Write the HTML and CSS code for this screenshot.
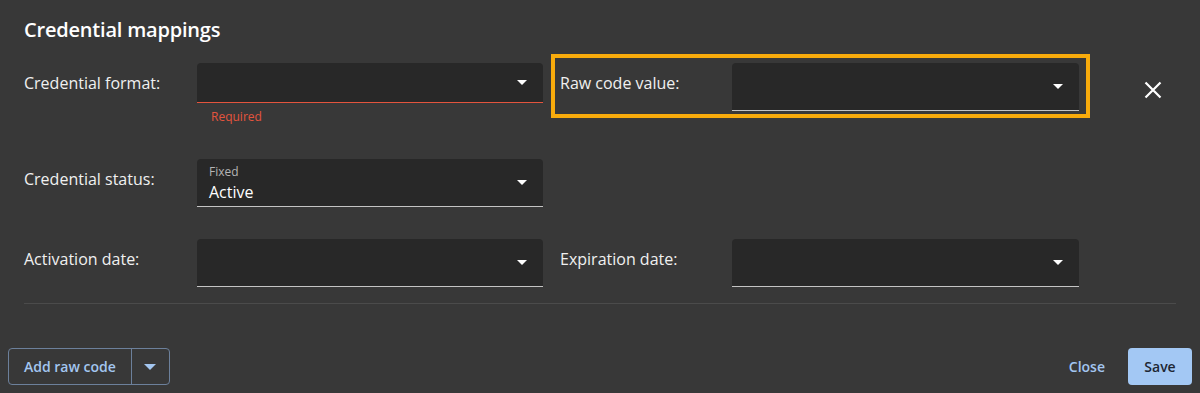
FILE: index.html
```html
<!DOCTYPE html>
<html lang="en">
<head>
<meta charset="utf-8">
<title>Credential mappings</title>
<link rel="stylesheet" href="styles.css">
</head>
<body>
<div class="dialog">
  <h2 class="title">Credential mappings</h2>

  <div class="row row-first">
    <div class="group">
      <span class="label">Credential format:</span>
      <div class="field-wrap">
        <div class="field field-short field-error"><span class="value"></span><span class="caret"></span></div>
        <div class="helper">Required</div>
      </div>
    </div>
    <div class="group group-right highlight">
      <span class="label label-right">Raw code value:</span>
      <div class="field field-right"><span class="value"></span><span class="caret"></span></div>
    </div>
    <button class="remove" aria-label="Remove">
      <svg width="18" height="18" viewBox="0 0 18 18"><path d="M1.5 1.5 L16.5 16.5 M16.5 1.5 L1.5 16.5" stroke="#ffffff" stroke-width="2.2" fill="none"/></svg>
    </button>
  </div>

  <div class="row row-second">
    <div class="group">
      <span class="label">Credential status:</span>
      <div class="field">
        <span class="value value-stack"><span class="small">Fixed</span><span class="big">Active</span></span>
        <span class="caret"></span>
      </div>
    </div>
  </div>

  <div class="row row-third">
    <div class="group">
      <span class="label">Activation date:</span>
      <div class="field"><span class="value"></span><span class="caret"></span></div>
    </div>
    <div class="group group-right">
      <span class="label label-right">Expiration date:</span>
      <div class="field field-right"><span class="value"></span><span class="caret"></span></div>
    </div>
  </div>

  <div class="separator"></div>

  <div class="footer">
    <div class="split">
      <button class="split-main">Add raw code</button>
      <button class="split-toggle" aria-label="More"><span class="caret-blue"></span></button>
    </div>
    <div class="actions">
      <button class="btn-text">Close</button>
      <button class="btn-primary">Save</button>
    </div>
  </div>
</div>
</body>
</html>
```

FILE: styles.css
```css
html, body {
  margin: 0;
  padding: 0;
  background: #383838;
}

body {
  width: 1200px;
  height: 393px;
  overflow: hidden;
  font-family: "Open Sans", "Noto Sans", sans-serif;
  color: #f2f2f2;
}

.dialog {
  display: flex;
  flex-direction: column;
}

.title {
  margin: 0;
  padding: 16px 24px 0;
  font-size: 20px;
  font-weight: 600;
  line-height: 28px;
  letter-spacing: -0.2px;
  color: #ffffff;
}

.row {
  display: flex;
  align-items: flex-start;
  padding-left: 24px;
}

.row-first {
  margin-top: 10px;
}

.row-second {
  margin-top: 25px;
}

.row-third {
  margin-top: 23px;
}

.group {
  display: flex;
  align-items: flex-start;
  padding-top: 9px;
}

.label {
  width: 173px;
  flex: none;
  font-size: 16px;
  line-height: 40px;
  color: #f0f0f0;
}

.label-right {
  width: 172px;
}

.field-wrap {
  display: flex;
  flex-direction: column;
}

.field {
  width: 346px;
  height: 48px;
  box-sizing: border-box;
  background: #282828;
  border-radius: 4px 4px 0 0;
  border-bottom: 1px solid #c4c4c4;
  display: flex;
  align-items: center;
  justify-content: space-between;
  padding: 0 16px 0 12px;
}

.field-short {
  height: 40px;
}

.field-error {
  border-bottom-color: #e4543d;
}

.field-right {
  width: 347px;
}

.helper {
  margin-top: 6px;
  padding-left: 14px;
  font-size: 12px;
  line-height: 16px;
  color: #e4543d;
}

.group-right {
  margin-left: 8px;
  padding: 5px 7px 3px 5px;
  border: 4px solid transparent;
}

.highlight {
  border-color: #f8ab0c;
}

.caret {
  width: 0;
  height: 0;
  border-left: 5px solid transparent;
  border-right: 5px solid transparent;
  border-top: 5px solid #ffffff;
  flex: none;
}

.value-stack {
  display: flex;
  flex-direction: column;
  align-self: flex-start;
  padding-top: 4px;
}

.small {
  font-size: 12px;
  line-height: 18px;
  color: #b4b4b4;
}

.big {
  font-size: 16px;
  line-height: 22px;
  color: #ffffff;
}

.remove {
  margin-left: 54px;
  align-self: center;
  background: none;
  border: 0;
  padding: 0;
  width: 18px;
  height: 18px;
  display: flex;
}

.separator {
  margin: 9px 24px 0;
  border-top: 1px solid #4b4b4b;
}

.footer {
  margin-top: 44px;
  padding: 0 8px;
  display: flex;
  justify-content: space-between;
  align-items: center;
}

button {
  font-family: "Open Sans", "Noto Sans", sans-serif;
  cursor: pointer;
}

.split {
  display: flex;
  height: 37px;
  border: 1px solid #6c809b;
  border-radius: 4px;
  box-sizing: border-box;
}

.split-main {
  background: none;
  border: 0;
  padding: 0 15px;
  white-space: nowrap;
  font-size: 14px;
  font-weight: 600;
  color: #a3c6f0;
}

.split-toggle {
  width: 38px;
  background: none;
  border: 0;
  border-left: 1px solid #6c809b;
  display: flex;
  align-items: center;
  justify-content: center;
  padding: 0;
}

.caret-blue {
  width: 0;
  height: 0;
  border-left: 6px solid transparent;
  border-right: 6px solid transparent;
  border-top: 6px solid #a3c6f0;
}

.actions {
  display: flex;
  align-items: center;
  gap: 7px;
}

.btn-text {
  height: 37px;
  background: none;
  border: 0;
  padding: 0 16px;
  font-size: 14px;
  font-weight: 600;
  color: #a3c6f0;
}

.btn-primary {
  height: 37px;
  width: 64px;
  background: #a3c8f4;
  border: 0;
  border-radius: 4px;
  padding: 0;
  font-size: 14px;
  font-weight: 600;
  color: #1d2733;
}
```
